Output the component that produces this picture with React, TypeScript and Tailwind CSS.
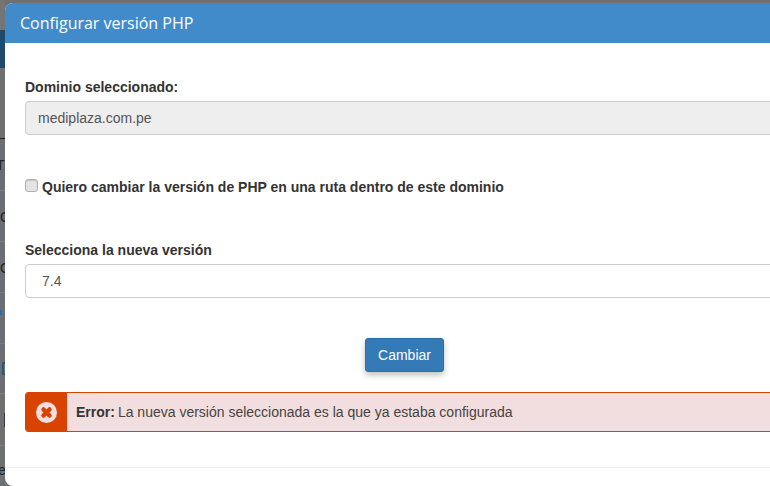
const font = { fontFamily: '"Liberation Sans", Arial, sans-serif' };

function Band({ h, className = "" }: { h: number; className?: string }) {
  return <div className={className} style={{ height: h }} />;
}

const glyphs: [number, number, string][] = [
  [157, -4, "T"],
  [209, 0, "C"],
  [260, 0, "C"],
  [462, -2, "e"],
];

export default function App() {
  return (
    <div className="relative flex h-[486px] w-[770px] overflow-hidden bg-[#6f7072]" style={font}>
      <div className="relative w-[5px] shrink-0 overflow-hidden">
        <div className="flex flex-col">
          <Band h={30} className="bg-[#757575]" />
          <Band h={38} className="bg-[#1f4a6b]" />
          <Band h={70} className="bg-[#707070]" />
          <div className="h-px bg-[#222]" />
          <Band h={51} className="bg-[#6b6e72]" />
          <div className="h-px bg-[#7d7d7d]" />
          <Band h={50} className="bg-[#6b6e72]" />
          <div className="h-px bg-[#7d7d7d]" />
          <Band h={50} className="bg-[#6b6e72]" />
          <div className="h-px bg-[#7d7d7d]" />
          <Band h={50} className="bg-[#6b6e72]" />
          <div className="h-px bg-[#7d7d7d]" />
          <Band h={49} className="bg-[#6b6e72]" />
          <div className="h-px bg-[#7d7d7d]" />
          <Band h={51} className="bg-[#707070]" />
          <div className="h-px bg-[#7d7d7d]" />
          <Band h={40} className="bg-[#6f7072]" />
        </div>
        <div className="absolute left-0 top-[310px] h-[5px] w-[2px] bg-[#1f6fb0]" />
        <div className="absolute left-[2px] top-[362px] h-[13px] w-[4px] border-y-2 border-l-2 border-[#24598a]" />
        <div className="absolute left-[4px] top-[413px] h-[14px] w-px bg-[#33386b]" />
        {glyphs.map(([top, left, ch]) => (
          <span key={top} className="absolute text-[14px] leading-[16px] text-[#222]" style={{ top, left }}>{ch}</span>
        ))}
      </div>
      <div className="mt-[3px] flex h-[483px] min-w-0 flex-1 flex-col overflow-hidden rounded-l-[8px] bg-white">
        <div className="flex h-[40px] shrink-0 items-center bg-[#428bca] pl-[15px] text-[16px] text-white" style={{ fontFamily: '"Open Sans", sans-serif', fontWeight: 500 }}>
          Configurar versión PHP
        </div>
        <div className="flex flex-col pl-[20px] text-[14px] text-[#333]">
          <label className="mt-[36px] font-bold leading-[16px]">Dominio seleccionado:</label>
          <div className="mt-[6px] flex h-[34px] w-[760px] items-center rounded-[4px] border border-[#ccc] bg-[#eee] pl-[12px] text-[#555]">mediplaza.com.pe</div>
          <div className="mt-[44px] flex h-[16px] items-center">
            <span className="h-[13px] w-[13px] -translate-y-[2px] rounded-[3px] border border-[#b0b0b0] bg-[#e4e4e4] shadow-[inset_0_1px_1px_rgba(0,0,0,0.15)]" />
            <span className="ml-[4px] font-bold">Quiero cambiar la versión de PHP en una ruta dentro de este dominio</span>
          </div>
          <label className="mt-[47px] font-bold leading-[16px]">Selecciona la nueva versión</label>
          <div className="mt-[6px] flex h-[34px] w-[760px] items-center rounded-[4px] border border-[#ccc] bg-white pl-[16px] text-[#555]">7.4</div>
          <div className="mt-[40px] flex w-[419px] justify-end">
            <button className="h-[34px] w-[79px] rounded-[3px] border border-[#2e6da4] bg-[#337ab7] text-white shadow-[0_3px_6px_rgba(0,0,0,0.25)]">Cambiar</button>
          </div>
          <div className="mt-[20px] flex h-[40px] w-[760px] overflow-hidden rounded-[3px] border border-[#d84400] bg-[#f2dede]">
            <div className="flex w-[41px] shrink-0 items-center justify-center bg-[#d84400]">
              <svg width="21" height="21" viewBox="0 0 21 21">
                <circle cx="10.5" cy="10.5" r="10.5" fill="#f2dede" />
                <path d="M7.5 7.5l6 6M13.5 7.5l-6 6" stroke="#d84400" strokeWidth="4.5" strokeLinecap="round" />
              </svg>
            </div>
            <div className="flex items-center pl-[9px] text-[#444]">
              <b className="mr-[3px] text-[#333]">Error:</b> La nueva versión seleccionada es la que ya estaba configurada
            </div>
          </div>
        </div>
        <div className="mt-[35px] border-t border-[#f0f0f0]" />
      </div>
    </div>
  );
}
